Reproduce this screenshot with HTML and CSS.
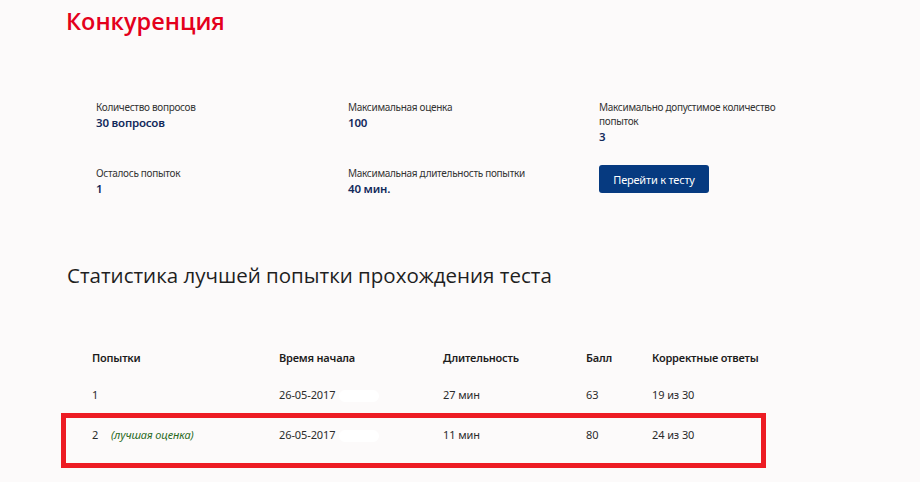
FILE: index.html
```html
<!DOCTYPE html>
<html lang="ru">
<head>
<meta charset="UTF-8">
<meta name="viewport" content="width=device-width, initial-scale=1.0">
<title>Конкуренция</title>
<link rel="stylesheet" href="styles.css">
</head>
<body>

<div class="page">
    <h1 class="title">Конкуренция</h1>

    <div class="info">
        <div class="info-item">
            <div class="info-label">Количество вопросов</div>
            <div class="info-value">30 вопросов</div>
        </div>
        <div class="info-item">
            <div class="info-label">Максимальная оценка</div>
            <div class="info-value">100</div>
        </div>
        <div class="info-item">
            <div class="info-label">Максимально допустимое количество попыток</div>
            <div class="info-value">3</div>
        </div>
        <div class="info-item">
            <div class="info-label">Осталось попыток</div>
            <div class="info-value">1</div>
        </div>
        <div class="info-item">
            <div class="info-label">Максимальная длительность попытки</div>
            <div class="info-value">40 мин.</div>
        </div>
        <div class="info-item">
            <button class="btn" type="button">Перейти к тесту</button>
        </div>
    </div>

    <h2 class="subtitle">Статистика лучшей попытки прохождения теста</h2>

    <div class="stats">
        <div class="row head">
            <div>Попытки</div>
            <div>Время начала</div>
            <div>Длительность</div>
            <div>Балл</div>
            <div>Корректные ответы</div>
        </div>
        <div class="row">
            <div>1</div>
            <div>26-05-2017<span class="hidden-time"></span></div>
            <div>27 мин</div>
            <div>63</div>
            <div>19 из 30</div>
        </div>
        <div class="row best">
            <div>2 <span class="best-note">(лучшая оценка)</span></div>
            <div>26-05-2017<span class="hidden-time"></span></div>
            <div>11 мин</div>
            <div>80</div>
            <div>24 из 30</div>
        </div>
    </div>
</div>

</body>
</html>
```

FILE: styles.css
```css
body {
    margin: 0;
    padding: 0;
    background-color: #fcfafa;
    font-family: "Noto Sans", "Open Sans", sans-serif;
    color: #2b2b2b;
}
.page {
    width: 920px;
    height: 482px;
    overflow: hidden;
}
.title {
    margin: 0;
    padding: 5px 0 0 66px;
    font-family: "Open Sans", sans-serif;
    font-size: 23.5px;
    font-weight: 600;
    line-height: 32px;
    color: #e4001c;
}
.info {
    display: grid;
    grid-template-columns: 252px 251px 200px;
    grid-template-rows: 66px 50px;
    margin: 63px 0 0 96px;
}
.info-label {
    font-size: 10px;
    letter-spacing: -0.3px;
    line-height: 14px;
    color: #333;
}
.info-value {
    margin-top: 2px;
    font-size: 11.5px;
    letter-spacing: -0.2px;
    font-weight: 600;
    line-height: 14px;
    color: #12295a;
}
.btn {
    margin-top: -1px;
    width: 110px;
    height: 28px;
    padding: 0;
    border: none;
    border-radius: 3px;
    background-color: #063a80;
    color: #fff;
    font-family: "Noto Sans", sans-serif;
    font-size: 11px;
    letter-spacing: -0.2px;
}
.subtitle {
    margin: 45px 0 0 67px;
    font-family: "Open Sans", sans-serif;
    font-size: 20.5px;
    font-weight: 400;
    line-height: 28px;
    color: #1f1f1f;
}
.stats {
    margin: 50px 0 0 61px;
    width: 705px;
}
.row {
    display: grid;
    grid-template-columns: 187px 164px 143px 66px 1fr;
    height: 37px;
    align-items: center;
    padding-left: 26px;
    box-sizing: border-box;
    border: 5px solid transparent;
    border-top: none;
    border-bottom: none;
    font-size: 11px;
    letter-spacing: -0.1px;
    white-space: nowrap;
    color: #2b2b2b;
}
.row.head {
    font-weight: 600;
    letter-spacing: -0.2px;
    color: #1c1c1c;
}
.row.best {
    height: 55px;
    align-items: start;
    padding-top: 9px;
    border: 5px solid #ed1c24;
}
.best-note {
    margin-left: 10px;
    font-style: italic;
    font-size: 11px;
    color: #2a6a1e;
}
.hidden-time {
    display: inline-block;
    width: 40px;
    height: 12px;
    margin-left: 4px;
    vertical-align: middle;
    background-color: #fff;
    border-radius: 6px;
}
```
